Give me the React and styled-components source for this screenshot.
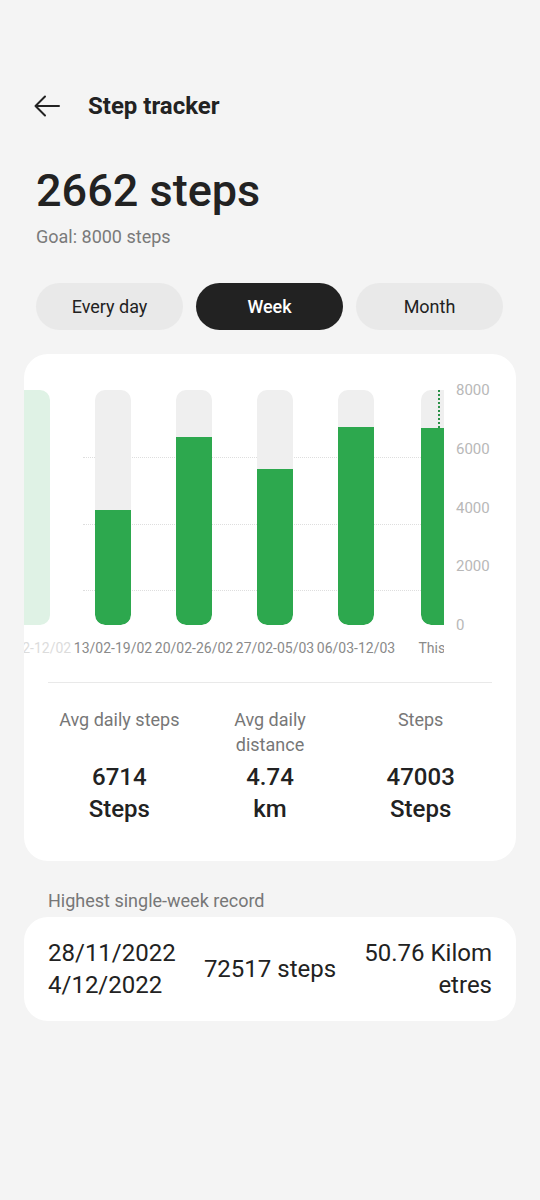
import React from 'react';
import styled, { createGlobalStyle } from 'styled-components';

const weeks = [
  { label: '06/02-12/02', value: 8000, faded: true },
  { label: '13/02-19/02', value: 3910 },
  { label: '20/02-26/02', value: 6400 },
  { label: '27/02-05/03', value: 5320 },
  { label: '06/03-12/03', value: 6750 },
  { label: 'This week', value: 6714, current: true },
];

const axis = ['8000', '6000', '4000', '2000', '0'];
const MAX = 8000;

export default function App() {
  return (
    <Page>
      <GlobalStyle />
      <Header>
        <BackButton aria-label="Back">
          <svg width="26" height="22" viewBox="0 0 26 22" fill="none">
            <path d="M1.5 11H25M11 1.5L1.5 11L11 20.5" stroke="#222" strokeWidth="2" strokeLinecap="round" strokeLinejoin="round" />
          </svg>
        </BackButton>
        <Title>Step tracker</Title>
      </Header>

      <BigCount>2662 steps</BigCount>
      <Goal>Goal: 8000 steps</Goal>

      <Tabs>
        <Tab>Every day</Tab>
        <Tab active>Week</Tab>
        <Tab>Month</Tab>
      </Tabs>

      <Card>
        <ChartRow>
          <Plot>
            <Gridline style={{ top: '25%' }} />
            <Gridline style={{ top: '50%' }} />
            <Gridline style={{ top: '75%' }} />
            <Bars>
              {weeks.map((w) => (
                <Column key={w.label}>
                  <Track faded={w.faded}>
                    {!w.faded && <Fill style={{ height: `${(w.value / MAX) * 100}%` }} />}
                    {w.current && <Marker style={{ height: `${100 - (w.value / MAX) * 100}%` }} />}
                  </Track>
                  <XLabel faded={w.faded} current={w.current}>{w.label}</XLabel>
                </Column>
              ))}
            </Bars>
          </Plot>
          <Axis>
            {axis.map((a) => (
              <AxisLabel key={a}>{a}</AxisLabel>
            ))}
          </Axis>
        </ChartRow>

        <Divider />

        <Stats>
          <Stat>
            <StatLabel>Avg daily steps</StatLabel>
            <StatValue>6714<br />Steps</StatValue>
          </Stat>
          <Stat>
            <StatLabel>Avg daily distance</StatLabel>
            <StatValue>4.74<br />km</StatValue>
          </Stat>
          <Stat>
            <StatLabel>Steps</StatLabel>
            <StatValue>47003<br />Steps</StatValue>
          </Stat>
        </Stats>
      </Card>

      <SectionLabel>Highest single-week record</SectionLabel>
      <RecordCard>
        <RecordText>28/11/2022<br />4/12/2022</RecordText>
        <RecordText align="center">72517 steps</RecordText>
        <RecordText align="right">50.76 Kilom<br />etres</RecordText>
      </RecordCard>
    </Page>
  );
}

/* Styled components
   ========================================================================== */
const GlobalStyle = createGlobalStyle`
  body {
    margin: 0;
    background: #f4f4f4;
    font-family: Roboto, "Noto Sans", "Liberation Sans", sans-serif;
    color: #222;
  }
`;

const Page = styled.div`
  width: 540px;
  min-height: 1200px;
  box-sizing: border-box;
  padding-top: 82px;
`;

const Header = styled.div`
  display: flex;
  align-items: center;
  height: 48px;
  padding-left: 34px;
`;

const BackButton = styled.div`
  display: flex;
  align-items: center;
  width: 26px;
  margin-right: 28px;
`;

const Title = styled.h1`
  margin: 0;
  font-size: 24px;
  font-weight: 700;
`;

const BigCount = styled.div`
  margin: 35px 0 0 36px;
  font-size: 45px;
  line-height: 52px;
  font-weight: 500;
`;

const Goal = styled.div`
  margin: 8px 0 0 36px;
  font-size: 18px;
  line-height: 24px;
  color: #7a7a7a;
`;

const Tabs = styled.div`
  display: grid;
  grid-template-columns: repeat(3, 147px);
  gap: 13px;
  margin: 34px 0 0 36px;
`;

const Tab = styled.div`
  height: 47px;
  border-radius: 24px;
  display: flex;
  align-items: center;
  justify-content: center;
  font-size: 18px;
  font-weight: ${({ active }) => (active ? 500 : 400)};
  background: ${({ active }) => (active ? '#222' : '#e9e9e9')};
  color: ${({ active }) => (active ? '#fff' : '#222')};
`;

const Card = styled.div`
  margin: 24px 24px 0;
  background: #fff;
  border-radius: 24px;
  overflow: hidden;
  padding: 36px 0 36px;
`;

const ChartRow = styled.div`
  display: flex;
  align-items: flex-start;
`;

const Plot = styled.div`
  position: relative;
  width: 420px;
  overflow: hidden;
`;

const Gridline = styled.div`
  position: absolute;
  left: 59px;
  width: 338px;
  border-top: 1px dotted #dedede;
`;

const Bars = styled.div`
  position: relative;
  display: flex;
  margin-left: -32.5px;
`;

const Column = styled.div`
  flex: 0 0 81px;
  display: flex;
  flex-direction: column;
  align-items: center;
`;

const Track = styled.div`
  position: relative;
  width: 36px;
  height: 235px;
  border-radius: 10px;
  overflow: hidden;
  background: ${({ faded }) => (faded ? '#dff2e5' : '#efefef')};
`;

const Fill = styled.div`
  position: absolute;
  left: 0;
  right: 0;
  bottom: 0;
  background: #2da84e;
  border-radius: 0 0 10px 10px;
`;

const Marker = styled.div`
  position: absolute;
  top: 0;
  left: 17px;
  border-left: 2px dotted #2a8f47;
`;

const XLabel = styled.div`
  margin-top: 14px;
  font-size: 14px;
  line-height: 18px;
  white-space: nowrap;
  align-self: ${({ current }) => (current ? 'flex-start' : 'center')};
  margin-left: ${({ current }) => (current ? '22px' : '0')};
  color: ${({ faded }) => (faded ? '#dcdcdc' : '#8a8a8a')};
`;

const Axis = styled.div`
  display: flex;
  flex-direction: column;
  justify-content: space-between;
  height: 253px;
  margin: -9px 0 0 12px;
`;

const AxisLabel = styled.div`
  font-size: 15px;
  line-height: 18px;
  color: #b8b8b8;
`;

const Divider = styled.div`
  height: 1px;
  margin: 25px 24px 0;
  background: #e9e9e9;
`;

const Stats = styled.div`
  display: grid;
  grid-template-columns: repeat(3, 1fr);
  padding: 24px 20px 0;
`;

const Stat = styled.div`
  display: flex;
  flex-direction: column;
  align-items: center;
  text-align: center;
  padding: 0 10px;
`;

const StatLabel = styled.div`
  min-height: 50px;
  font-size: 18px;
  line-height: 25px;
  color: #777;
`;

const StatValue = styled.div`
  margin-top: 4px;
  font-size: 24px;
  line-height: 32px;
  font-weight: 500;
`;

const SectionLabel = styled.div`
  margin: 28px 0 0 48px;
  font-size: 18px;
  line-height: 24px;
  color: #777;
`;

const RecordCard = styled.div`
  display: grid;
  grid-template-columns: 1fr auto 1fr;
  align-items: center;
  margin: 4px 24px 0;
  padding: 20px 24px;
  background: #fff;
  border-radius: 24px;
`;

const RecordText = styled.div`
  font-size: 24px;
  line-height: 32px;
  text-align: ${({ align }) => align || 'left'};
`;
